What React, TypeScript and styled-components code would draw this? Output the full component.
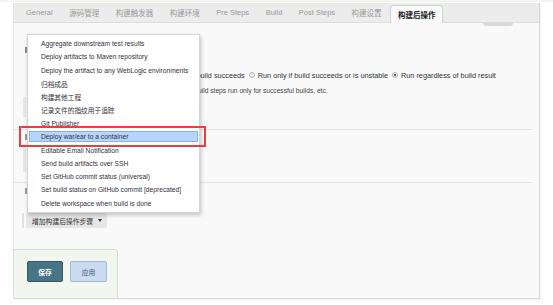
import React from "react";
import styled, { createGlobalStyle } from "styled-components";

const GlobalStyle = createGlobalStyle`
    html, body { margin:0; padding:0; background:#fff; }
    body {
        font-family:"Liberation Sans", "Noto Sans CJK SC", sans-serif;
        color:#333;
    }
`

const Page = styled.div`
    width:553px;
    height:305px;
    overflow:hidden;
    border-top:2px solid #f3f6ee;
    padding:1px 0 0 13px;
    box-sizing:border-box;
`
const Panel = styled.div`
    width:525px;
    border:1px solid #e2e2e2;
    border-right-color:#d6d6d6;
    border-bottom-color:#d6d6d6;
    border-top:none;
    box-shadow:1px 1px 1px rgba(0,0,0,0.04);
    display:flex;
    flex-direction:column;
`
const TabBar = styled.div`
    height:20px;
    box-sizing:border-box;
    background:#ececec;
    border-bottom:1px solid #dcdcdc;
    display:flex;
    align-items:flex-end;
    padding-left:4px;
`
const Tab = styled.div<{active?:boolean}>`
    height:${p=>p.active ? '18px' : '19px'};
    box-sizing:border-box;
    display:flex;
    align-items:center;
    padding:${p=>p.active ? '0 6px 0 7px' : '0 8px'};
    margin-right:${p=>p.active ? '0' : '0.5px'};
    margin-bottom:${p=>p.active ? '-1px' : '0'};
    font-size:7.5px;
    font-weight:${p=>p.active ? 'bold' : 'normal'};
    color:${p=>p.active ? '#1a1a1a' : '#9a9a9a'};
    background:${p=>p.active ? '#f9f9f9' : 'transparent'};
    border:${p=>p.active ? '1px solid #d2d2d2' : 'none'};
    border-bottom:none;
    border-radius:3px 3px 0 0;
    white-space:nowrap;
`
const Content = styled.div`
    position:relative;
    height:275px;
    background:#f9f9f9;
    display:flex;
    flex-direction:column;
    padding-right:7px;
`
const Grip = styled.div`
    align-self:flex-end;
    width:30px;
    height:3px;
    margin-right:19px;
    background:#d9d9d9;
    border-radius:0 0 3px 3px;
`
/* heading whose label sits under the open menu; only its first glyph edge shows */
const HeadingMark = styled.div<{top:number; tint:string}>`
    margin-top:${p=>p.top}px;
    height:12px;
    padding-left:11px;
    display:flex;
    align-items:center;
    &::before{
        content:'';
        width:3px;
        height:6px;
        background:${p=>p.tint};
    }
`
const FieldRow = styled.div`
    margin-top:13px;
    height:12px;
    display:flex;
    align-items:center;
    padding-left:137px;
    font-size:7.3px;
    color:#333;
    white-space:nowrap;
`
const RadioOption = styled.label`
    display:flex;
    align-items:center;
    margin-right:4px;
`
const Radio = styled.span<{checked?:boolean}>`
    width:6px;
    height:6px;
    box-sizing:border-box;
    border-radius:50%;
    border:1px solid #b4b4b4;
    background:#ececec;
    margin-right:3px;
    display:flex;
    align-items:center;
    justify-content:center;
    &::after{
        content:'';
        width:2px;
        height:2px;
        border-radius:50%;
        background:${p=>p.checked ? '#333' : 'transparent'};
    }
`
const Help = styled.div`
    margin-top:6px;
    height:8px;
    padding-left:132px;
    font-size:6.65px;
    line-height:8px;
    color:#444;
    white-space:nowrap;
`
const Chunk = styled.div<{top:number; h:number}>`
    margin-top:${p=>p.top}px;
    margin-left:9px;
    height:${p=>p.h}px;
    width:3px;
    background:#e6e6e6;
`
const Separator = styled.div<{top:number}>`
    margin-top:${p=>p.top}px;
    height:1px;
    background:#e3e3e3;
`
const ButtonRow = styled.div`
    margin-top:16px;
    height:15px;
    display:flex;
    padding-left:8px;
`
const RowBar = styled.div`
    width:2px;
    background:#e2e2e2;
    margin-right:2px;
`
const AddButton = styled.div`
    width:81px;
    box-sizing:border-box;
    background:#e5e5e5;
    border-radius:2px;
    display:flex;
    align-items:center;
    padding-left:6px;
    font-size:6.8px;
    color:#333;
    white-space:nowrap;
    &::after{
        content:'';
        margin-left:5px;
        border-left:2.5px solid transparent;
        border-right:2.5px solid transparent;
        border-top:3px solid #333;
    }
`
const BottomBar = styled.div`
    margin-top:21px;
    margin-left:-1px;
    width:105px;
    height:49px;
    box-sizing:border-box;
    background:#f2f6ee;
    border:1px solid #d3e0cf;
    border-bottom:none;
    border-radius:0 4px 0 0;
    display:flex;
    gap:7px;
    padding:11px 0 0 13px;
`
const ActionButton = styled.div<{primary?:boolean}>`
    width:${p=>p.primary ? '36px' : '37px'};
    height:21px;
    box-sizing:border-box;
    border-radius:2px;
    border:1px solid ${p=>p.primary ? '#2f5868' : '#9ebadc'};
    background:${p=>p.primary ? '#487585' : '#cadbf0'};
    color:${p=>p.primary ? '#fff' : '#44577a'};
    font-size:6.8px;
    font-weight:${p=>p.primary ? 'bold' : 'normal'};
    display:flex;
    align-items:center;
    justify-content:center;
`
const Menu = styled.div`
    position:absolute;
    left:13px;
    top:11px;
    width:173px;
    box-sizing:border-box;
    background:#fff;
    border:1px solid #d4d4d4;
    box-shadow:1px 2px 4px rgba(0,0,0,0.22);
    padding:2px 0 2px;
    display:flex;
    flex-direction:column;
`
const MenuItem = styled.div<{selected?:boolean}>`
    position:relative;
    height:13.3px;
    display:flex;
    align-items:center;
    padding-left:13px;
    font-size:6.7px;
    color:#35303a;
    white-space:nowrap;
    &::before{
        content:'';
        display:${p=>p.selected ? 'block' : 'none'};
        position:absolute;
        left:1px;
        right:1px;
        top:1px;
        bottom:1px;
        background:#b7d5fc;
        border:1px solid #84b3ee;
    }
`
const ItemText = styled.span`
    position:relative;
`
const Callout = styled.div`
    position:absolute;
    left:-9px;
    right:-7px;
    top:-4px;
    bottom:-4px;
    border:2px solid #ec3d43;
`

const items = [
    'Aggregate downstream test results',
    'Deploy artifacts to Maven repository',
    'Deploy the artifact to any WebLogic environments',
    '归档成品',
    '构建其他工程',
    '记录文件的指纹用于追踪',
    'Git Publisher',
    'Deploy war/ear to a container',
    'Editable Email Notification',
    'Send build artifacts over SSH',
    'Set GitHub commit status (universal)',
    'Set build status on GitHub commit [deprecated]',
    'Delete workspace when build is done',
]
const tabs = ['General','源码管理','构建触发器','构建环境','Pre Steps','Build','Post Steps','构建设置']

export default function App() {
    return (
        <Page>
            <GlobalStyle />
            <Panel>
                <TabBar>
                    {tabs.map(t => <Tab key={t}>{t}</Tab>)}
                    <Tab active>构建后操作</Tab>
                </TabBar>
                <Content>
                    <Grip />
                    <HeadingMark top={18} tint="#9a8a78" />
                    <FieldRow>
                        <RadioOption><Radio />Run only if build succeeds</RadioOption>
                        <RadioOption><Radio />Run only if build succeeds or is unstable</RadioOption>
                        <RadioOption><Radio checked />Run regardless of build result</RadioOption>
                    </FieldRow>
                    <Help>Should the post-build steps run only for successful builds, etc.</Help>
                    <Chunk top={2} h={20} />
                    <Separator top={12} />
                    <HeadingMark top={1} tint="#a89a8a" />
                    <Chunk top={4} h={25} />
                    <Separator top={10} />
                    <HeadingMark top={2} tint="#a89a8a" />
                    <ButtonRow>
                        <RowBar />
                        <AddButton>增加构建后操作步骤</AddButton>
                    </ButtonRow>
                    <BottomBar>
                        <ActionButton primary>保存</ActionButton>
                        <ActionButton>应用</ActionButton>
                    </BottomBar>
                    <Menu>
                        {items.map((it, i) => (
                            <MenuItem key={it} selected={i === 7}>
                                <ItemText>{it}</ItemText>
                                {i === 7 && <Callout />}
                            </MenuItem>
                        ))}
                    </Menu>
                </Content>
            </Panel>
        </Page>
    )
}
